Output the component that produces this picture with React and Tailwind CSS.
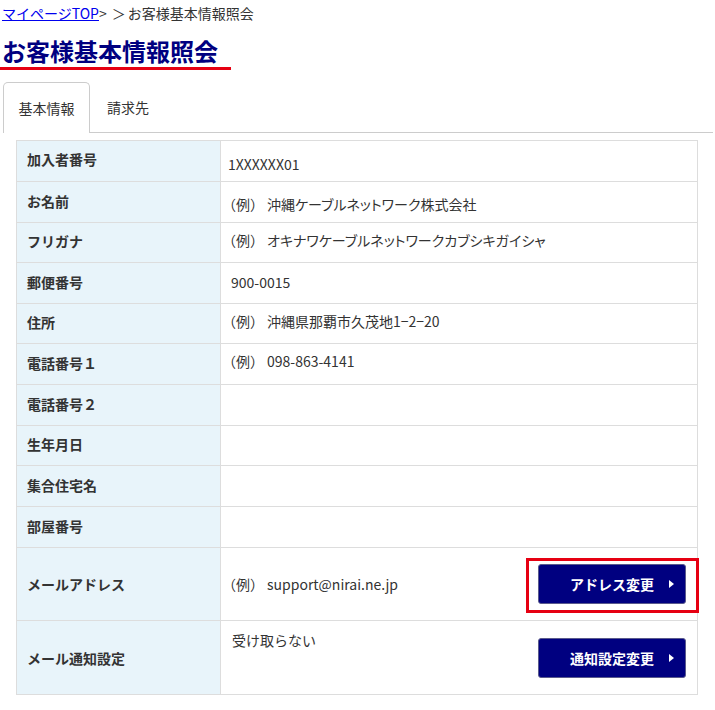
const font = { fontFamily: '"Noto Sans CJK JP", "Noto Sans", sans-serif' };

// ex: value starts with the "（例）" sample prefix
const rows = [
  { label: "加入者番号", value: "1XXXXXX01", h: "h-[41px]", pad: "pl-[7px] pt-[6px]", lpad: "pb-[5px]" },
  { label: "お名前", ex: true, value: "沖縄ケーブルネットワーク株式会社", h: "h-[41px]", pad: "pl-[1px] pt-[4px]", lpad: "pb-[3px]" },
  { label: "フリガナ", ex: true, value: "オキナワケーブルネットワークカブシキガイシャ", h: "h-[40px]", pad: "pl-[1px] pb-[5px]", lpad: "pb-[3px]" },
  { label: "郵便番号", value: "900-0015", h: "h-[41px]", pad: "pl-[10px] pb-[2px]", lpad: "pb-[3px]" },
  { label: "住所", ex: true, value: "沖縄県那覇市久茂地1−2−20", h: "h-[40px]", pad: "pl-[1px] pb-[5px]", lpad: "pb-[3px]" },
  { label: "電話番号１", ex: true, value: "098-863-4141", h: "h-[41px]", pad: "pl-[1px] pb-[7px]", lpad: "pb-[3px]" },
  { label: "電話番号２", value: "", h: "h-[41px]", pad: "", lpad: "pb-[3px]" },
  { label: "生年月日", value: "", h: "h-[40px]", pad: "", lpad: "pb-[3px]" },
  { label: "集合住宅名", value: "", h: "h-[41px]", pad: "", lpad: "pb-[3px]" },
  { label: "部屋番号", value: "", h: "h-[41px]", pad: "", lpad: "pb-[3px]" },
];

const Example = ({ children }) => (
  <span>
    <span className="mr-[3px]">（例）</span>
    <span className="[font-feature-settings:'palt']">{children}</span>
  </span>
);

const Caret = () => (
  <svg width="5" height="8" viewBox="0 0 5 8" className="absolute right-[11px] top-1/2 -translate-y-1/2">
    <polygon points="0,0 5,4 0,8" fill="#ffffff" />
  </svg>
);

const NavyButton = ({ children }) => (
  <button className="relative w-[148px] h-[40px] bg-[#000080] border border-[#5a5a8c] rounded-[3px] text-white font-bold text-[14px] flex items-center justify-center">
    {children}
    <Caret />
  </button>
);

const App = () => {
  return (
    <div className="w-[713px] bg-white text-[#333] pb-4 [text-spacing-trim:space-all]" style={font}>
      {/* breadcrumb */}
      <div className="pt-[3px] text-[14px] leading-[20px] pl-[2px]">
        <a href="#" className="text-[#0000ee] underline">マイページTOP</a>
        <span>&gt;</span>
        <span className="ml-[5px] mr-[2px]">＞</span>
        <span>お客様基本情報照会</span>
      </div>

      {/* title */}
      <h1 className="inline-block mt-[12px] pl-[2px] pr-[13px] text-[24px] leading-[32px] font-bold text-[#000080] border-b-[3px] border-[#e60012]">
        お客様基本情報照会
      </h1>

      {/* tabs */}
      <div className="flex mt-[12px] text-[14px]">
        <div className="ml-[3px] w-[87px] h-[51px] flex items-center justify-center border border-b-0 border-[#ccc] rounded-t-[5px]">
          基本情報
        </div>
        <div className="h-[51px] flex items-center pl-[17px] pr-4 border-b border-[#ccc]">請求先</div>
        <div className="flex-1 h-[51px] border-b border-[#ccc]" />
      </div>

      {/* table */}
      <div className="ml-4 mt-[7px] w-[682px] border-l border-t border-[#ddd] text-[14px] leading-[20px]">
        {rows.map((r) => (
          <div key={r.label} className={`flex ${r.h}`}>
            <div className={`w-[204px] shrink-0 flex items-center pl-[10px] font-bold bg-[#e8f4fa] border-r border-b border-[#ddd] ${r.lpad}`}>
              {r.label}
            </div>
            <div className={`flex-1 flex items-center border-r border-b border-[#ddd] ${r.pad}`}>
              {r.ex ? <Example>{r.value}</Example> : r.value}
            </div>
          </div>
        ))}

        <div className="flex h-[73px]">
          <div className="w-[204px] shrink-0 flex items-center pl-[10px] font-bold bg-[#e8f4fa] border-r border-b border-[#ddd]">
            メールアドレス
          </div>
          <div className="flex-1 flex items-center justify-between pl-[1px] pr-[11px] border-r border-b border-[#ddd]">
            <Example>support@nirai.ne.jp</Example>
            <div className="relative">
              <NavyButton>アドレス変更</NavyButton>
              <div className="absolute -left-[12px] -right-[13px] -top-[6px] -bottom-[9px] border-[3px] border-[#e60012] pointer-events-none" />
            </div>
          </div>
        </div>

        <div className="flex h-[74px]">
          <div className="w-[204px] shrink-0 flex items-center pl-[10px] font-bold bg-[#e8f4fa] border-r border-b border-[#ddd]">
            メール通知設定
          </div>
          <div className="flex-1 flex items-center justify-between pl-[11px] pr-[11px] border-r border-b border-[#ddd]">
            <span className="self-start pt-[9px]">受け取らない</span>
            <NavyButton>通知設定変更</NavyButton>
          </div>
        </div>
      </div>
    </div>
  );
};

export default App;
